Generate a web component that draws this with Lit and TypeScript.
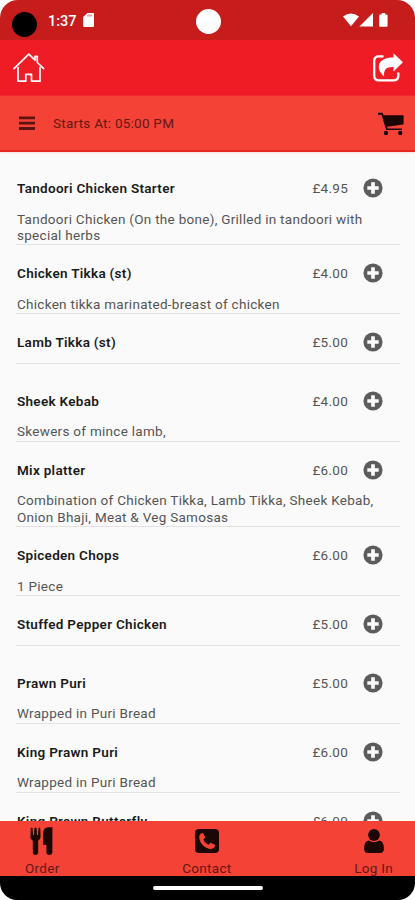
import { LitElement, html, css, svg, nothing } from "lit";
import { customElement } from "lit/decorators.js";

interface Dish {
  name: string;
  price: string;
  lines: string[];
}

const dishes: Dish[] = [
  { name: "Tandoori Chicken Starter", price: "£4.95", lines: ["Tandoori Chicken (On the bone), Grilled in tandoori with", "special herbs"] },
  { name: "Chicken Tikka (st)", price: "£4.00", lines: ["Chicken tikka marinated-breast of chicken"] },
  { name: "Lamb Tikka (st)", price: "£5.00", lines: [] },
  { name: "Sheek Kebab", price: "£4.00", lines: ["Skewers of mince lamb,"] },
  { name: "Mix platter", price: "£6.00", lines: ["Combination of Chicken Tikka, Lamb Tikka, Sheek Kebab,", "Onion Bhaji, Meat & Veg Samosas"] },
  { name: "Spiceden Chops", price: "£6.00", lines: ["1 Piece"] },
  { name: "Stuffed Pepper Chicken", price: "£5.00", lines: [] },
  { name: "Prawn Puri", price: "£5.00", lines: ["Wrapped in Puri Bread"] },
  { name: "King Prawn Puri", price: "£6.00", lines: ["Wrapped in Puri Bread"] },
  { name: "King Prawn Butterfly", price: "£6.00", lines: [] },
];

const icon = (w: number, h: number, body: unknown) =>
  html`<svg width=${w} height=${h} viewBox="0 0 ${w} ${h}">${body}</svg>`;

const sdCard = icon(12, 14, svg`<path fill="#fff" d="M4.5 0H10Q11 0 11 1V13Q11 14 10 14H1.2Q.2 14 .2 13V4Z"/><path d="M4.2 2.6H9.2" stroke="#e3a3a3" stroke-width="2"/>`);
const signals = icon(46, 14, svg`<g fill="#fff"><path d="M0 3.4Q8 -2.6 16 3.4L8 13.3Z"/><path d="M30 0V13.6H16.4Z"/><path d="M38.6 1.4V0H42.2V1.4H43.6Q44.6 1.4 44.6 2.4V12.8Q44.6 13.7 43.6 13.7H37.2Q36.2 13.7 36.2 12.8V2.4Q36.2 1.4 37.2 1.4Z"/></g>`);
const home = icon(32, 30, svg`<g fill="none" stroke="#fff" stroke-width="1.7" stroke-linejoin="round" stroke-linecap="round"><path d="M1 15.6L15.8 1.2L22 7.2V3.4H24.3V9.5L30.7 15.6"/><path d="M5 14.6V28.2H12.8V21.3H18.5V28.2H27V14.6"/></g>`);
const share = icon(32, 30, svg`<path d="M11.5 3.4H7Q2.2 3.4 2.2 8V22.7Q2.2 27.3 7 27.3H21.7Q26.3 27.3 26.3 22.7V19.5" fill="none" stroke="#fff" stroke-width="2.3"/><path fill="#fff" d="M21.5 .2L31 9.3L21.5 18.4V14C14.5 13.6 11.3 16.5 12.2 23.7C2.6 15 6 4.4 21.5 4.6Z"/>`);
const cart = icon(28, 24, svg`<path fill="#1c0505" d="M1 .8H5.4L6.6 3.2H26.6V12.6L10 14.7L10.6 16.5H25V18H9.2L4.5 2.7H1Z"/><circle cx="9" cy="21" r="2.2" fill="#1c0505"/><circle cx="23.2" cy="21" r="2.2" fill="#1c0505"/>`);
const bars = icon(16, 14, svg`<path d="M0 1.9H16M0 7.2H16M0 12.5H16" stroke="#5b1410" stroke-width="2.8"/>`);
const plus = icon(20, 20, svg`<circle cx="10" cy="10" r="9.6" fill="#5c5c5c"/><path d="M10 4.3V15.7M4.3 10H15.7" stroke="#fafafa" stroke-width="3.7"/>`);
const cutlery = icon(24, 28, svg`<g fill="#1c0705"><path d="M.8 1Q1.8 0 2.5 1L3 8H4L4.4 1Q5.5 0 6.6 1L7 8H8L8.5 1Q9.5 0 10.2 1L10.6 10Q10.4 12.6 8.2 13.8V26Q7.8 28 5.5 28Q3.2 28 2.8 26V13.8Q.5 12.6 .4 10Z"/><path d="M18 .3H22.4V25.5Q22 28 19.5 28Q16.6 28 16.4 25.5V17.8H13V6Q13.4 1 18 .3Z"/></g>`);
const phone = icon(24, 24, svg`<rect width="24" height="24" rx="4" fill="#1c0705"/><path fill="#f44336" d="M4.2 7.5C4.4 5.6 6 4.2 8 4L10.3 8.2C9.9 9.3 8.5 9.8 8.4 10.6C9.1 12.9 11.2 15 13.5 15.7C14.5 15.4 14.8 13.9 16 13.8L20.2 16C20 18.3 18.4 19.8 16.2 20C9.6 19.7 4.1 14 4.2 7.5Z"/>`);
const person = icon(20, 24, svg`<g fill="#1c0705"><circle cx="10" cy="6" r="5.9"/><path d="M4.6 11.6Q10 15 15.4 11.6Q19.9 12 19.9 20.3Q19.7 24 16.4 24H3.6Q.3 24 .1 20.3Q.1 12 4.6 11.6Z"/></g>`);

@customElement("app-root")
export class AppRoot extends LitElement {
  static styles = css`
    :host {
      display: block;
      background: #fff;
      font-family: Roboto, "Liberation Sans", sans-serif;
      font-size: 13.5px;
      color: #555;
    }
    svg { display: block; flex: none; }
    .screen {
      display: flex;
      flex-direction: column;
      height: 900px;
      box-sizing: border-box;
      overflow: hidden;
      border-radius: 18px 18px 17px 17px;
      background: #fafafa;
    }
    .status {
      position: relative;
      flex: none;
      height: 40px;
      display: flex;
      align-items: center;
      padding: 0 26px 0 12px;
      background: #c71c1c;
    }
    .dot { width: 25px; height: 25px; border-radius: 50%; background: #000; margin-top: 9px; }
    .time { color: #fff; font-size: 14.5px; font-weight: 500; margin: 2px 6px 0 11px; }
    .camera {
      position: absolute;
      left: 50%;
      top: 9px;
      width: 25px;
      height: 25px;
      margin-left: -12px;
      border-radius: 50%;
      background: #fff;
    }
    .push { margin-left: auto; }
    .appbar {
      flex: none;
      height: 56px;
      display: flex;
      align-items: center;
      justify-content: space-between;
      padding: 0 11px 0 13px;
      background: #ef1c25;
    }
    .subbar {
      flex: none;
      height: 56px;
      box-sizing: border-box;
      display: flex;
      align-items: center;
      padding: 0 10px 0 19px;
      background: #f44336;
      border-bottom: 2px solid #e32620;
      box-shadow: 0 1px 2px #f9dedd;
    }
    .subbar .push { padding-top: 2px; }
    .starts { margin-left: 18px; color: #641713; letter-spacing: 0.25px; }
    .list { flex: 1; min-height: 0; overflow: hidden; padding: 8.1px 15px 0 16px; }
    .dish.bare { padding-bottom: 8.6px; }
    .head {
      display: flex;
      align-items: center;
      height: 45.1px;
      padding: 5.4px 17px 0 1px;
    }
    .bare .head { height: 36.7px; padding: 9.7px 17px 2.7px 1px; }
    .name { flex: 1; color: #1a1a1a; font-weight: 600; letter-spacing: 0.3px; }
    .price { letter-spacing: 0.27px; margin-right: 15px; }
    .desc { padding-left: 1px; letter-spacing: 0.28px; line-height: 16.3px; white-space: nowrap; }
    .rule { height: 1px; background: #e3e3e3; }
    .desc + .rule { margin-top: 1.2px; }
    .tabs {
      flex: none;
      height: 55px;
      box-sizing: border-box;
      display: flex;
      justify-content: space-between;
      padding: 0 22px 0 25px;
      background: #f44336;
    }
    .tab { display: flex; flex-direction: column; align-items: center; color: #641713; letter-spacing: 0.3px; }
    .glyph { flex: none; height: 39px; display: flex; align-items: center; }
    .tab span { flex: none; line-height: 17px; }
    .gesture { flex: none; height: 24px; display: flex; align-items: center; justify-content: center; background: #000; }
    .pill { width: 110px; height: 4px; border-radius: 2px; background: #fff; }
  `;

  private dish(d: Dish) {
    return html`<div class="dish ${d.lines.length ? "" : "bare"}">
      <div class="head">
        <span class="name">${d.name}</span><span class="price">${d.price}</span>${plus}
      </div>
      ${d.lines.length ? html`<div class="desc">${d.lines.map((l) => html`<div>${l}</div>`)}</div>` : nothing}
      <div class="rule"></div>
    </div>`;
  }

  render() {
    return html`<div class="screen">
      <div class="status">
        <div class="dot"></div>
        <span class="time">1:37</span>${sdCard}
        <div class="camera"></div>
        <div class="push">${signals}</div>
      </div>
      <div class="appbar">${home}${share}</div>
      <div class="subbar">
        ${bars}<span class="starts">Starts At: 05:00 PM</span>
        <div class="push">${cart}</div>
      </div>
      <div class="list">${dishes.map((d) => this.dish(d))}</div>
      <div class="tabs">
        <div class="tab"><div class="glyph">${cutlery}</div><span>Order</span></div>
        <div class="tab"><div class="glyph">${phone}</div><span>Contact</span></div>
        <div class="tab"><div class="glyph">${person}</div><span>Log In</span></div>
      </div>
      <div class="gesture"><div class="pill"></div></div>
    </div>`;
  }
}
